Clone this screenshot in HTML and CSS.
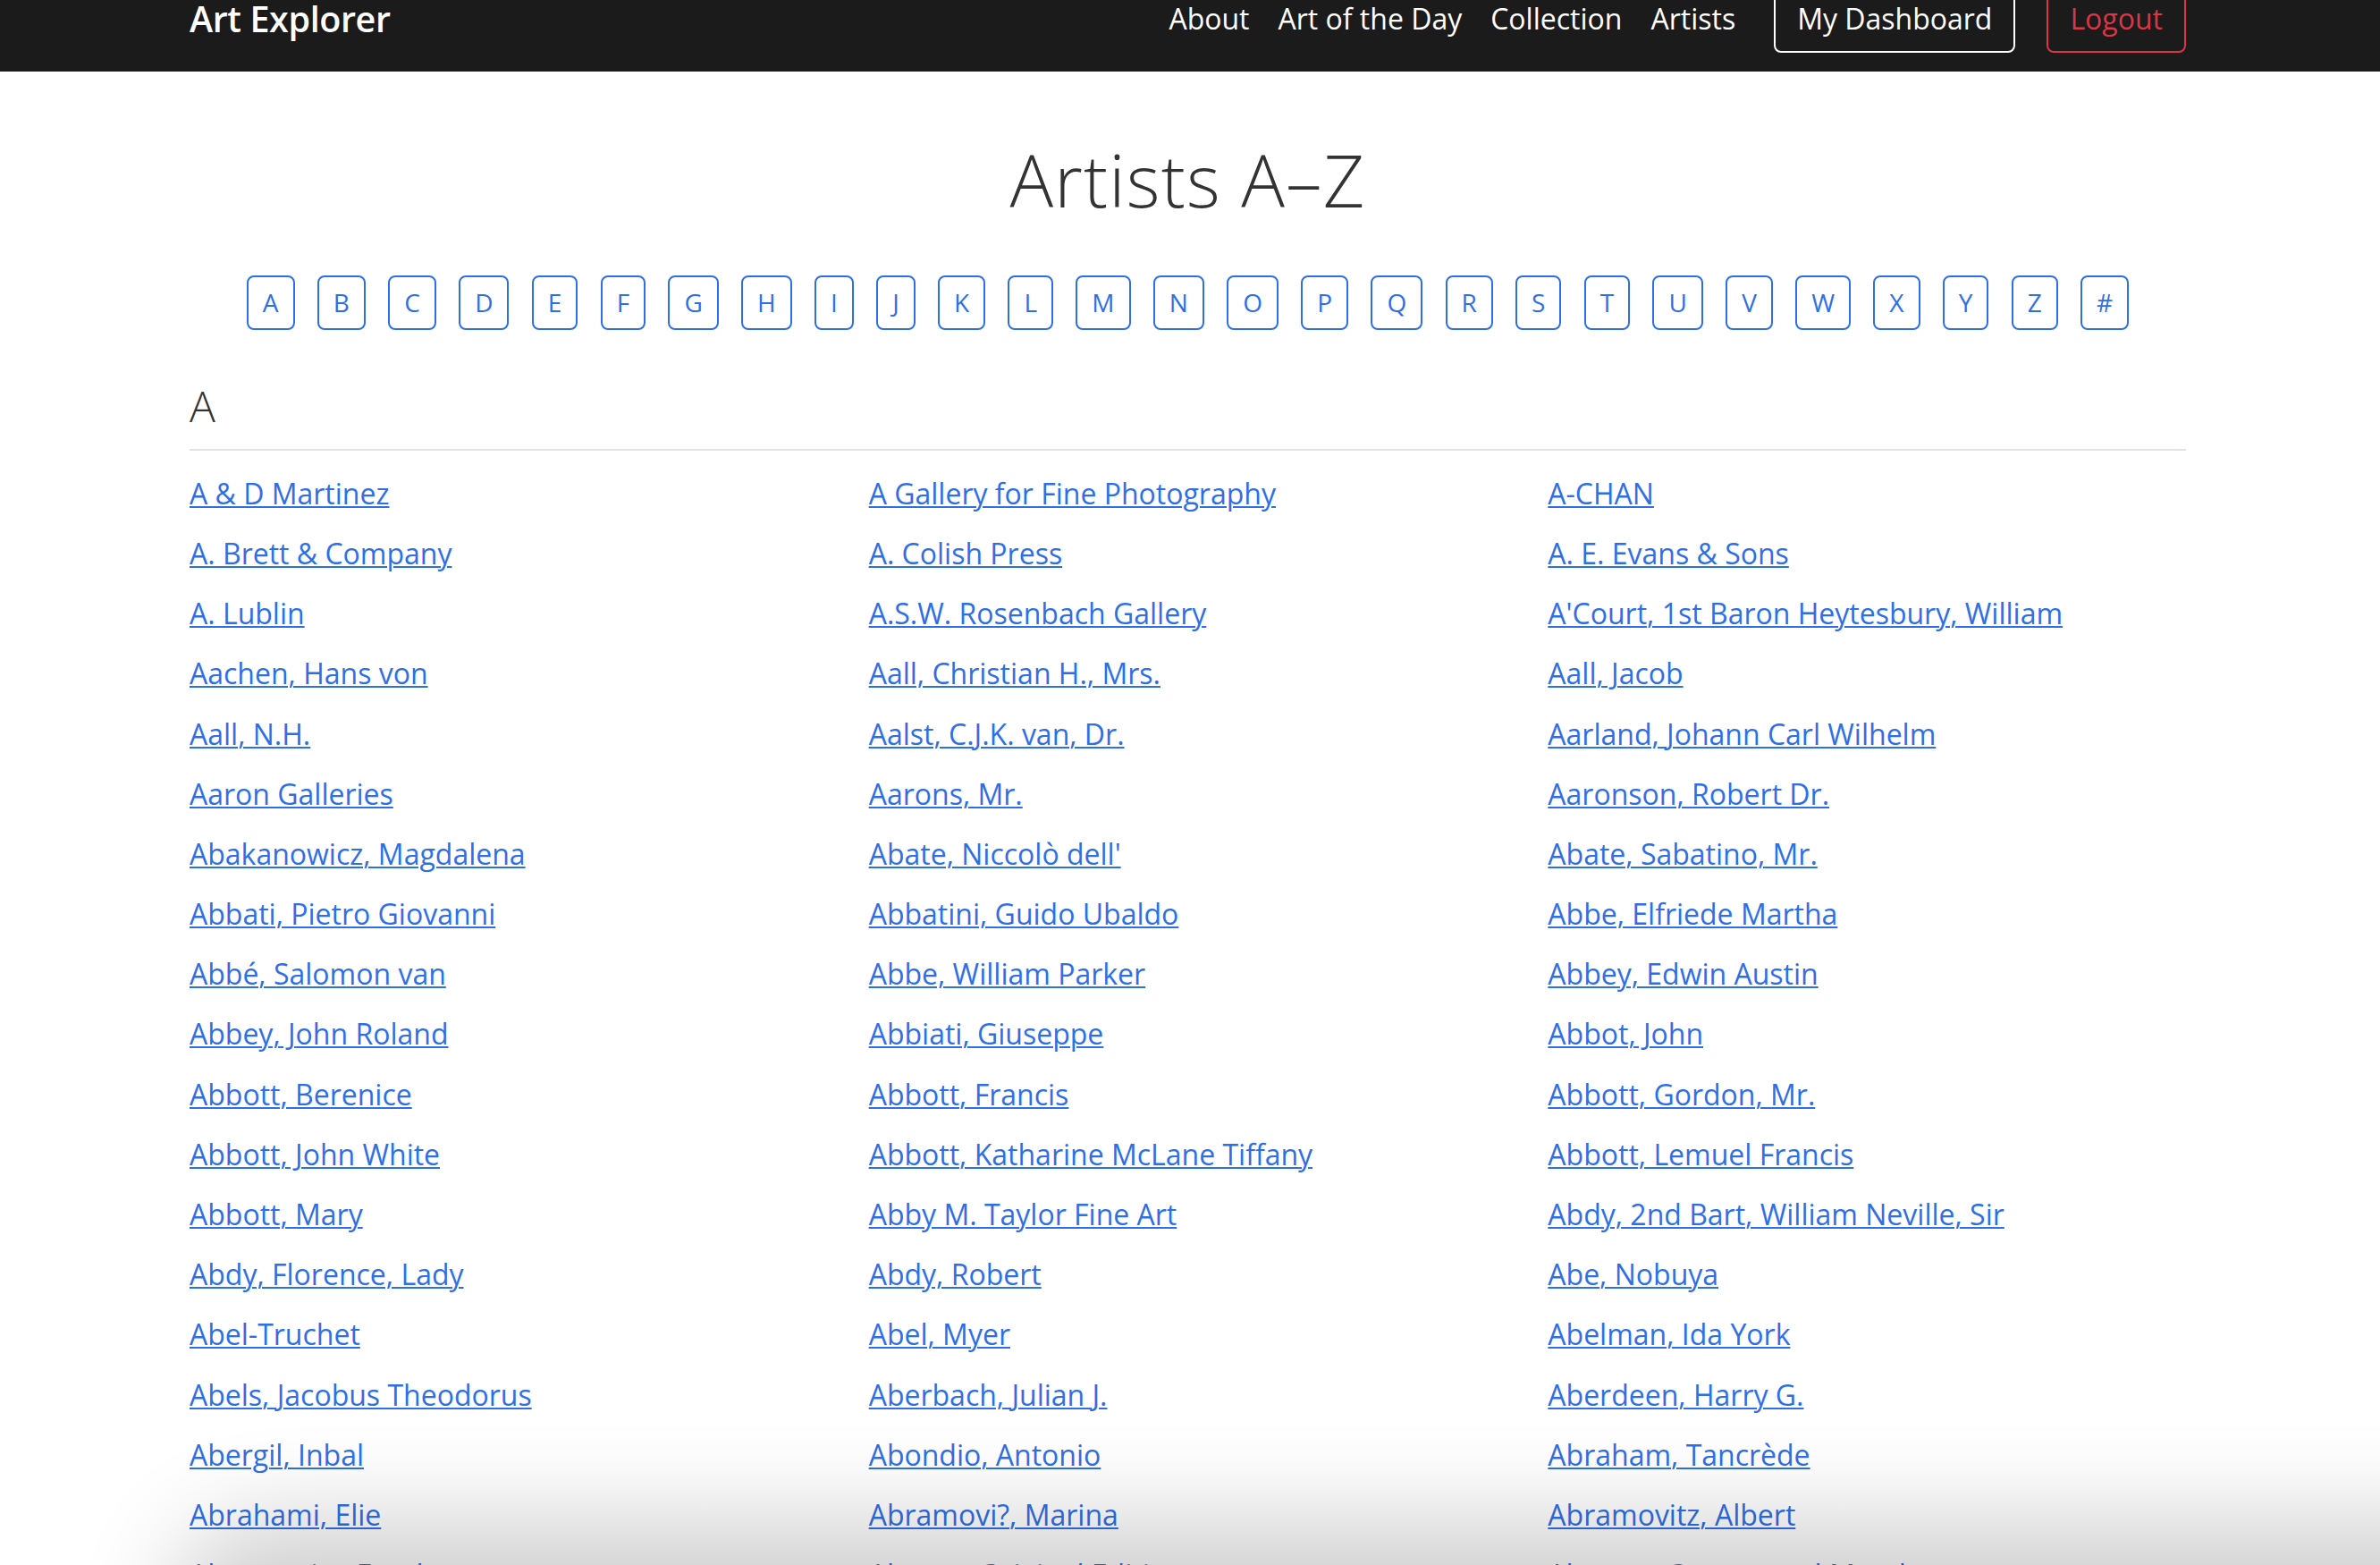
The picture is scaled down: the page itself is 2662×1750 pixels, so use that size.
FILE: index.html
```html
<!DOCTYPE html>
<html lang="en">
<head>
<meta charset="utf-8">
<title>Artists A–Z · Art Explorer</title>
<link rel="stylesheet" href="styles.css">
</head>
<body>
<header class="navbar">
  <div class="container nav-inner">
    <a class="brand" href="#">Art Explorer</a>
    <nav class="nav-links">
      <a class="nav-link" href="#">About</a>
      <a class="nav-link" href="#">Art of the Day</a>
      <a class="nav-link" href="#">Collection</a>
      <a class="nav-link" href="#">Artists</a>
    </nav>
    <a class="btn btn-light" href="#">My Dashboard</a>
    <a class="btn btn-danger" href="#">Logout</a>
  </div>
</header>

<main class="container">
  <h1 class="page-title">Artists A–Z</h1>
  <div class="letters">
    <a class="letter" href="#">A</a><a class="letter" href="#">B</a><a class="letter" href="#">C</a><a class="letter" href="#">D</a><a class="letter" href="#">E</a><a class="letter" href="#">F</a><a class="letter" href="#">G</a><a class="letter" href="#">H</a><a class="letter" href="#">I</a><a class="letter" href="#">J</a><a class="letter" href="#">K</a><a class="letter" href="#">L</a><a class="letter" href="#">M</a><a class="letter" href="#">N</a><a class="letter" href="#">O</a><a class="letter" href="#">P</a><a class="letter" href="#">Q</a><a class="letter" href="#">R</a><a class="letter" href="#">S</a><a class="letter" href="#">T</a><a class="letter" href="#">U</a><a class="letter" href="#">V</a><a class="letter" href="#">W</a><a class="letter" href="#">X</a><a class="letter" href="#">Y</a><a class="letter" href="#">Z</a><a class="letter" href="#">#</a>
  </div>

  <section class="group">
    <h2 class="group-title">A</h2>
    <hr class="rule">
    <ul class="artist-grid">
      <li><a href="#">A &amp; D Martinez</a></li>
      <li><a href="#">A Gallery for Fine Photography</a></li>
      <li><a href="#">A-CHAN</a></li>
      <li><a href="#">A. Brett &amp; Company</a></li>
      <li><a href="#">A. Colish Press</a></li>
      <li><a href="#">A. E. Evans &amp; Sons</a></li>
      <li><a href="#">A. Lublin</a></li>
      <li><a href="#">A.S.W. Rosenbach Gallery</a></li>
      <li><a href="#">A'Court, 1st Baron Heytesbury, William</a></li>
      <li><a href="#">Aachen, Hans von</a></li>
      <li><a href="#">Aall, Christian H., Mrs.</a></li>
      <li><a href="#">Aall, Jacob</a></li>
      <li><a href="#">Aall, N.H.</a></li>
      <li><a href="#">Aalst, C.J.K. van, Dr.</a></li>
      <li><a href="#">Aarland, Johann Carl Wilhelm</a></li>
      <li><a href="#">Aaron Galleries</a></li>
      <li><a href="#">Aarons, Mr.</a></li>
      <li><a href="#">Aaronson, Robert Dr.</a></li>
      <li><a href="#">Abakanowicz, Magdalena</a></li>
      <li><a href="#">Abate, Niccolò dell'</a></li>
      <li><a href="#">Abate, Sabatino, Mr.</a></li>
      <li><a href="#">Abbati, Pietro Giovanni</a></li>
      <li><a href="#">Abbatini, Guido Ubaldo</a></li>
      <li><a href="#">Abbe, Elfriede Martha</a></li>
      <li><a href="#">Abbé, Salomon van</a></li>
      <li><a href="#">Abbe, William Parker</a></li>
      <li><a href="#">Abbey, Edwin Austin</a></li>
      <li><a href="#">Abbey, John Roland</a></li>
      <li><a href="#">Abbiati, Giuseppe</a></li>
      <li><a href="#">Abbot, John</a></li>
      <li><a href="#">Abbott, Berenice</a></li>
      <li><a href="#">Abbott, Francis</a></li>
      <li><a href="#">Abbott, Gordon, Mr.</a></li>
      <li><a href="#">Abbott, John White</a></li>
      <li><a href="#">Abbott, Katharine McLane Tiffany</a></li>
      <li><a href="#">Abbott, Lemuel Francis</a></li>
      <li><a href="#">Abbott, Mary</a></li>
      <li><a href="#">Abby M. Taylor Fine Art</a></li>
      <li><a href="#">Abdy, 2nd Bart, William Neville, Sir</a></li>
      <li><a href="#">Abdy, Florence, Lady</a></li>
      <li><a href="#">Abdy, Robert</a></li>
      <li><a href="#">Abe, Nobuya</a></li>
      <li><a href="#">Abel-Truchet</a></li>
      <li><a href="#">Abel, Myer</a></li>
      <li><a href="#">Abelman, Ida York</a></li>
      <li><a href="#">Abels, Jacobus Theodorus</a></li>
      <li><a href="#">Aberbach, Julian J.</a></li>
      <li><a href="#">Aberdeen, Harry G.</a></li>
      <li><a href="#">Abergil, Inbal</a></li>
      <li><a href="#">Abondio, Antonio</a></li>
      <li><a href="#">Abraham, Tancrède</a></li>
      <li><a href="#">Abrahami, Elie</a></li>
      <li><a href="#">Abramovi?, Marina</a></li>
      <li><a href="#">Abramovitz, Albert</a></li>
      <li><a href="#">Abramovitz, Frank</a></li>
      <li><a href="#">Abrams Original Editions</a></li>
      <li><a href="#">Abrams, George and Maud</a></li>
    </ul>
  </section>
</main>

<div class="bottom-shade" aria-hidden="true"></div>
</body>
</html>
```
FILE: styles.css
```css
* { box-sizing: border-box; }

html, body {
  margin: 0;
  padding: 0;
}

body {
  font-family: "Open Sans", "Liberation Sans", sans-serif;
  font-size: 32px;
  line-height: 1.5;
  color: #333333;
  background: #ffffff;
  overflow: hidden;
}

.container {
  width: 2233px;
  margin-left: calc(50% - 1119px);
}

/* ---------- navbar ---------- */
.navbar {
  background: #1b1b1b;
  height: 80px;
  overflow: hidden;
}

.nav-inner {
  display: flex;
  align-items: center;
  height: 76px;
  margin-top: -17px;
}

.brand {
  color: #ffffff;
  font-weight: 600;
  font-size: 39.5px;
  line-height: 42px;
  text-decoration: none;
  letter-spacing: -0.4px;
}

.nav-links {
  display: flex;
  margin-left: auto;
}

.nav-link {
  color: #ffffff;
  text-decoration: none;
  padding: 0 16px;
  line-height: 48px;
}

.btn {
  display: inline-block;
  border: 2px solid;
  border-radius: 8px;
  padding: 12px 24px;
  line-height: 48px;
  height: 76px;
  text-decoration: none;
}

.btn-light {
  color: #ffffff;
  border-color: #ffffff;
  margin-left: 27px;
}

.btn-danger {
  color: #dc3545;
  border-color: #dc3545;
  margin-left: 35px;
}

/* ---------- title ---------- */
.page-title {
  margin: 72px 0 0;
  text-align: center;
  font-size: 81px;
  font-weight: 300;
  line-height: 1.2;
  letter-spacing: 1.2px;
  color: #333333;
}

/* ---------- letters ---------- */
.letters {
  display: flex;
  justify-content: center;
  gap: 25.3px;
  margin-top: 59px;
}

.letter {
  display: inline-block;
  border: 2px solid #2f6fe6;
  border-radius: 8px;
  color: #2f6fe6;
  font-size: 28px;
  line-height: 41px;
  padding: 8px 16px;
  text-decoration: none;
}

/* ---------- group ---------- */
.group {
  margin-top: 56px;
}

.group-title {
  margin: 0;
  font-size: 48px;
  font-weight: 300;
  line-height: 1.2;
  color: #333333;
}

.rule {
  margin: 19px 0 0;
  border: 0;
  border-top: 2px solid #dfe2e6;
  height: 0;
}

.artist-grid {
  list-style: none;
  margin: 24px 0 0;
  padding: 0;
  display: grid;
  grid-template-columns: repeat(3, 1fr);
  column-gap: 46px;
  row-gap: 19.2px;
}

.artist-grid li {
  line-height: 48px;
  white-space: nowrap;
}

.artist-grid a {
  color: #2f6fe6;
  text-decoration: underline;
  text-decoration-thickness: 2px;
  text-underline-offset: 2px;
}

/* ---------- bottom shade overlay ---------- */
.bottom-shade {
  position: fixed;
  left: 240px;
  right: -200px;
  bottom: -120px;
  height: 120px;
  border-radius: 60px;
  box-shadow: 0 0 110px 50px rgba(0, 0, 0, 0.19);
  z-index: 10;
}
```
